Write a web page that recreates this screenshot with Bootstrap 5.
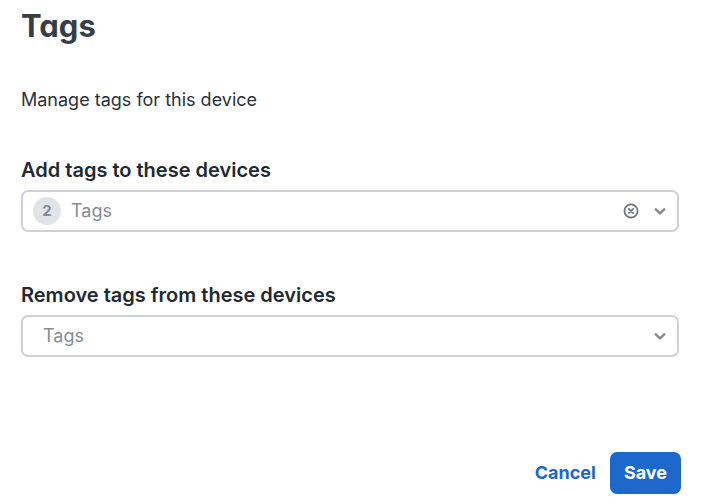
<!DOCTYPE html>
<html lang="en">
<head>
<meta charset="utf-8">
<meta name="viewport" content="width=device-width, initial-scale=1">
<title>Tags</title>
<link href="https://cdn.jsdelivr.net/npm/bootstrap@5.3.0/dist/css/bootstrap.min.css" rel="stylesheet">
<style>
body { font-family: Inter, "Liberation Sans", sans-serif; font-size: 18px; line-height: 24px; color: #2b3138; background: #fff; }
.panel { padding: 4px 22px 10px 21px; }
.title { font-size: 31px; line-height: 44px; font-weight: 700; color: #373e46; font-feature-settings: "cv11"; margin-bottom: 40px; }
.intro { margin-bottom: 46px; }
.field-group { margin-bottom: 95px; }
.field-group:first-of-type { margin-bottom: 51px; }
.field-label { font-size: 20px; line-height: 24px; font-weight: 600; color: #232930; margin-bottom: 8px; }
.combo { height: 42px; border: 2px solid #ced2d7; border-radius: 7px; padding: 0 10px; }
.combo:focus-within { border-color: #1c68cd; }
.combo-input { border: 0; outline: 0; background: none; padding: 0 0 2px 10px; height: 38px; min-width: 0; font-size: 18px; color: #2b3138; }
.combo-input::placeholder { color: #858d97; opacity: 1; }
.count { width: 28px; height: 28px; background: #e0e4e9; color: #848c95; font-size: 15px; font-weight: 700; }
.icon-btn { border: 0; background: none; padding: 0; line-height: 0; }
.clear-btn { margin-right: 14px; }
.actions { margin-right: -2px; }
.action { font-size: 18px; line-height: 24px; font-weight: 700; padding: 9px 14px; border: 0; border-radius: 7px; }
.action-cancel, .action-cancel:hover { color: #1c68cd; }
.action-save, .action-save:hover { background: #1c68cd; color: #fff; }
</style>
</head>
<body>
<main class="panel">
  <h1 class="title">Tags</h1>
  <p class="intro">Manage tags for this device</p>
  <form>
    <div class="field-group">
      <label class="field-label d-block" for="add-tags">Add tags to these devices</label>
      <div class="combo d-flex align-items-center">
        <span class="count rounded-circle d-flex align-items-center justify-content-center">2</span>
        <input class="combo-input flex-grow-1" id="add-tags" type="text" placeholder="Tags" autocomplete="off">
        <button class="icon-btn clear-btn" type="button" aria-label="Clear tags">
          <svg width="16" height="16" viewBox="0 0 16 16" fill="none" stroke="#69727d" stroke-width="1.7" stroke-linecap="round"><circle cx="8" cy="8" r="6.6"/><path d="M5.8 5.8l4.4 4.4M10.2 5.8l-4.4 4.4"/></svg>
        </button>
        <button class="icon-btn" type="button" aria-label="Show tags to add">
          <svg width="14" height="14" viewBox="0 0 14 14" fill="none" stroke="#888" stroke-width="2.2"><path d="M2 4.6l5 4.8 5-4.8"/></svg>
        </button>
      </div>
    </div>
    <div class="field-group">
      <label class="field-label d-block" for="remove-tags">Remove tags from these devices</label>
      <div class="combo d-flex align-items-center">
        <input class="combo-input flex-grow-1" id="remove-tags" type="text" placeholder="Tags" autocomplete="off">
        <button class="icon-btn" type="button" aria-label="Show tags to remove">
          <svg width="14" height="14" viewBox="0 0 14 14" fill="none" stroke="#888" stroke-width="2.2"><path d="M2 4.6l5 4.8 5-4.8"/></svg>
        </button>
      </div>
    </div>
    <div class="actions d-flex justify-content-end">
      <button class="btn action action-cancel" type="button">Cancel</button>
      <button class="btn action action-save" type="submit">Save</button>
    </div>
  </form>
</main>
<script src="https://cdn.jsdelivr.net/npm/bootstrap@5.3.0/dist/js/bootstrap.bundle.min.js"></script>
</body>
</html>
